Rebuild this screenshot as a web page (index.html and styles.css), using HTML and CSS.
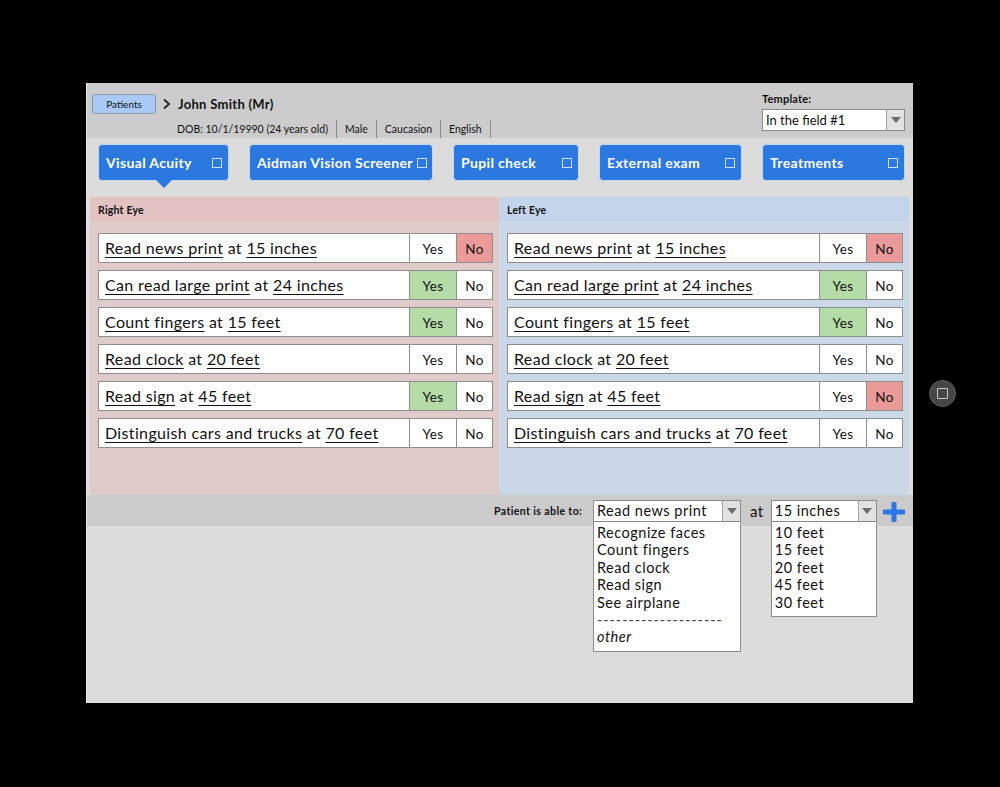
FILE: index.html
```html
<!DOCTYPE html>
<html>
<head>
<meta charset="utf-8">
<link rel="stylesheet" href="styles.css">
</head>
<body>
<div class="device">
  <div class="screen">
    <div class="top">
      <div class="patient">
        <div class="crumbs">
          <span class="btn-patients">Patients</span>
          <svg class="chev" width="10" height="12" viewBox="0 0 10 12"><path d="M2 1.5 L7 6 L2 10.5" fill="none" stroke="#222" stroke-width="1.8"/></svg>
          <span class="name">John Smith (Mr)</span>
        </div>
        <div class="info">
          <span class="cell">DOB: 10/1/19990 (24 years old)</span><span class="cell">Male</span><span class="cell">Caucasion</span><span class="cell">English</span>
        </div>
      </div>
      <div class="template">
        <div class="tlabel">Template:</div>
        <div class="select tsel"><span class="val">In the field #1</span><span class="arrow"><i></i></span></div>
      </div>
    </div>
    <div class="tabs">
      <div class="tab active w1"><span class="tl">Visual Acuity</span><span class="box"></span></div>
      <div class="tab w2"><span class="tl">Aidman Vision Screener</span><span class="box"></span></div>
      <div class="tab w3"><span class="tl">Pupil check</span><span class="box"></span></div>
      <div class="tab w4"><span class="tl">External exam</span><span class="box"></span></div>
      <div class="tab w5"><span class="tl">Treatments</span><span class="box"></span></div>
    </div>
    <div class="panels">
      <div class="panel right">
        <div class="phead">Right Eye</div>
        <div class="rows">
          <div class="row"><div class="txt"><u>Read news print</u> at <u>15 inches</u></div><div class="yes">Yes</div><div class="no red">No</div></div>
          <div class="row"><div class="txt"><u>Can read large print</u> at <u>24 inches</u></div><div class="yes green">Yes</div><div class="no">No</div></div>
          <div class="row"><div class="txt"><u>Count fingers</u> at <u>15 feet</u></div><div class="yes green">Yes</div><div class="no">No</div></div>
          <div class="row"><div class="txt"><u>Read clock</u> at <u>20 feet</u></div><div class="yes">Yes</div><div class="no">No</div></div>
          <div class="row"><div class="txt"><u>Read sign</u> at <u>45 feet</u></div><div class="yes green">Yes</div><div class="no">No</div></div>
          <div class="row"><div class="txt"><u>Distinguish cars and trucks</u> at <u>70 feet</u></div><div class="yes">Yes</div><div class="no">No</div></div>
        </div>
      </div>
      <div class="panel left">
        <div class="phead">Left Eye</div>
        <div class="rows">
          <div class="row"><div class="txt"><u>Read news print</u> at <u>15 inches</u></div><div class="yes">Yes</div><div class="no red">No</div></div>
          <div class="row"><div class="txt"><u>Can read large print</u> at <u>24 inches</u></div><div class="yes green">Yes</div><div class="no">No</div></div>
          <div class="row"><div class="txt"><u>Count fingers</u> at <u>15 feet</u></div><div class="yes green">Yes</div><div class="no">No</div></div>
          <div class="row"><div class="txt"><u>Read clock</u> at <u>20 feet</u></div><div class="yes">Yes</div><div class="no">No</div></div>
          <div class="row"><div class="txt"><u>Read sign</u> at <u>45 feet</u></div><div class="yes">Yes</div><div class="no red">No</div></div>
          <div class="row"><div class="txt"><u>Distinguish cars and trucks</u> at <u>70 feet</u></div><div class="yes">Yes</div><div class="no">No</div></div>
        </div>
      </div>
    </div>
    <div class="addbar">
      <span class="ablabel">Patient is able to:</span>
      <div class="dd dd1">
        <div class="select s1"><span class="val">Read news print</span><span class="arrow"><i></i></span></div>
        <div class="list l1">
          <div>Recognize faces</div>
          <div>Count fingers</div>
          <div>Read clock</div>
          <div>Read sign</div>
          <div>See airplane</div>
          <div class="dash">--------------------</div>
          <div class="other">other</div>
        </div>
      </div>
      <span class="at">at</span>
      <div class="dd dd2">
        <div class="select s2"><span class="val">15 inches</span><span class="arrow"><i></i></span></div>
        <div class="list l2">
          <div>10 feet</div>
          <div>15 feet</div>
          <div>20 feet</div>
          <div>45 feet</div>
          <div>30 feet</div>
        </div>
      </div>
      <svg class="plus" width="22" height="20" viewBox="0 0 22 20"><rect x="8.5" y="0" width="5" height="20" rx="1" fill="#2a78e2"/><rect x="0" y="7.5" width="22" height="5" rx="1" fill="#2a78e2"/></svg>
    </div>
    <div class="rest"></div>
  </div>
  <div class="home"><span></span></div>
</div>
</body>
</html>
```
FILE: styles.css
```css
* { box-sizing: border-box; }
html, body { margin: 0; padding: 0; }
body {
  background: #000;
  width: 1000px;
  height: 787px;
  overflow: hidden;
  font-family: Lato, "Open Sans", sans-serif;
  color: #111;
}
.device { position: relative; width: 1000px; height: 787px; padding: 83px 0 0 86px; }
.screen {
  width: 827px;
  height: 620px;
  background: #dcdcdc;
  display: flex;
  flex-direction: column;
  border-left: 1px solid #e8e8e8;
}
.top {
  height: 55px;
  background: #cccccc;
  display: flex;
  justify-content: space-between;
  padding: 10px 8px 0 5px;
}
.crumbs { display: flex; align-items: center; height: 21px; }
.btn-patients {
  width: 64px; height: 20px;
  background: #a9c9f7;
  border: 1px solid #8896a8;
  border-radius: 3px;
  font-size: 10px;
  display: flex; align-items: center; justify-content: center;
}
.chev { margin: 0 6px 0 6px; }
.name { font-weight: bold; font-size: 13px; letter-spacing: 0.3px; }
.info { display: flex; padding-left: 85px; margin-top: 6px; font-size: 10.5px; height: 18px; }
.info .cell { border-right: 1px solid #8a8a8a; padding: 3px 8px 0 8px; line-height: 13px; }
.info .cell:first-child { padding-left: 0; }
.template { width: 143px; }
.tlabel { font-size: 11px; font-weight: bold; margin: 0 0 5px 0; line-height: 11px; letter-spacing: 0.2px; }
.select {
  display: flex;
  background: #fff;
  border: 1px solid #8a8a8a;
  height: 22px;
}
.select .val { flex: 1; padding-left: 3px; font-size: 13px; line-height: 20px; white-space: nowrap; }
.select .arrow {
  width: 18px;
  background: #e2e2e2;
  border-left: 1px solid #a8a8a8;
  display: flex; align-items: center; justify-content: center;
}
.select .arrow i {
  width: 0; height: 0;
  border-left: 5px solid transparent;
  border-right: 5px solid transparent;
  border-top: 6px solid #6c6c6c;
}
.tabs {
  height: 59px;
  display: flex;
  gap: 20px;
  padding: 6px 0 0 11px;
}
.tab {
  position: relative;
  height: 37px;
  background: #2b78e0;
  border: 1px solid #c4d6f0;
  border-radius: 4px;
  color: #fff;
  font-weight: bold;
  font-size: 14px;
  letter-spacing: 0.35px;
  white-space: nowrap;
  display: flex; align-items: center; justify-content: space-between;
  padding: 0 6px 0 7px;
}
.tab .box { flex-shrink: 0; width: 10px; height: 10px; border: 1.5px solid #cfe0f8; margin-left: 4px; }
.w1 { width: 131px; }
.w2 { width: 184px; }
.w3 { width: 126px; }
.w4 { width: 143px; }
.w5 { width: 143px; }
.tab.active::after {
  content: "";
  position: absolute;
  left: 57px;
  bottom: -8px;
  width: 0; height: 0;
  border-left: 8px solid transparent;
  border-right: 8px solid transparent;
  border-top: 8px solid #2b78e0;
}
.panels { height: 298px; display: flex; padding: 0 4px 0 3px; }
.panel { width: 410px; }
.panel.right { background: #e0cbcb; width: 409px; }
.panel.left { background: #cbd8e7; }
.phead { height: 24px; font-size: 10.5px; font-weight: bold; padding: 7px 0 0 8px; letter-spacing: 0.2px; }
.right .phead { background: #e3c2c2; }
.left .phead { background: #c3d4eb; }
.rows { display: flex; flex-direction: column; gap: 7px; padding: 12px 6px 0 8px; }
.row {
  display: flex;
  height: 30px;
  background: #fff;
  border: 1px solid #8e8e8e;
  font-size: 16px;
}
.row .txt { flex: 1; padding: 4px 0 0 6px; white-space: nowrap; letter-spacing: 0.35px; }
.row u { text-decoration-thickness: 1px; text-underline-offset: 3px; }
.row .yes, .row .no {
  border-left: 1px solid #8e8e8e;
  font-size: 13.5px;
  letter-spacing: 0.3px;
  display: flex; align-items: center; justify-content: center;
  padding-top: 2px;
}
.row .yes { width: 47px; }
.row .no { width: 36px; }
.green { background: #b5dba6; }
.red { background: #eb9a9a; }
.addbar {
  height: 31px;
  background: #cbcbcb;
  display: flex;
  align-items: center;
  padding-left: 407px;
}
.ablabel { font-size: 10.5px; font-weight: bold; margin-right: 7px; width: 92px; letter-spacing: 0.4px; white-space: nowrap; }
.dd { position: relative; }
.dd1 { width: 148px; }
.dd2 { width: 106px; }
.s1, .s2 { height: 22px; }
.s1 .val, .s2 .val { font-size: 14.5px; letter-spacing: 0.5px; }
.at { font-size: 15px; margin: 0 7px 0 9px; letter-spacing: 0.5px; }
.list {
  position: absolute;
  left: 0; top: 21px;
  width: 100%;
  background: #fff;
  border: 1px solid #8a8a8a;
  font-size: 14.5px;
  letter-spacing: 0.5px;
  line-height: 17.6px;
  padding: 2px 0 0 3px;
  z-index: 2;
}
.l1 { height: 131px; }
.l2 { height: 96px; }
.list .dash { color: #444; letter-spacing: 0.9px; line-height: 17px; overflow: hidden; white-space: nowrap; }
.list .other { font-style: italic; }
.plus { margin-left: 6px; margin-top: 2px; }
.rest { flex: 1; }
.home {
  position: absolute;
  left: 929px; top: 380px;
  width: 27px; height: 27px;
  border-radius: 50%;
  background: #464646;
  border: 1px solid #5e5e5e;
  display: flex; align-items: center; justify-content: center;
}
.home span { width: 11px; height: 11px; border: 1.5px solid #c8c8c8; border-radius: 1px; }
```
